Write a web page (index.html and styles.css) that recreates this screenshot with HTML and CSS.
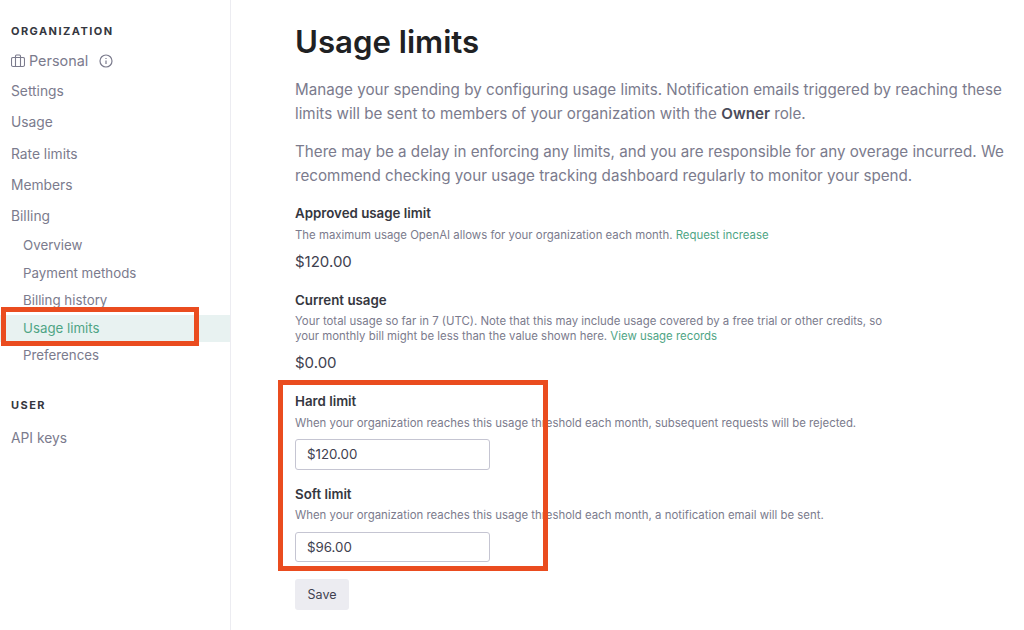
FILE: index.html
```html
<!DOCTYPE html>
<html lang="en">
<head>
<meta charset="utf-8">
<title>Usage limits</title>
<link rel="stylesheet" href="styles.css">
</head>
<body>
<div class="app">
  <aside class="sidebar">
    <div class="heading org-heading">ORGANIZATION</div>
    <div class="item personal">
      <svg class="icon" viewBox="0 0 14 14" width="14" height="14" fill="none" stroke="currentColor" stroke-width="1.100"><rect x="0.5" y="3.5" width="13" height="9" rx="1.500"/><path d="M4.500 3.500V2a1 1 0 0 1 1-1h3a1 1 0 0 1 1 1v1.500M4.500 3.500v9M9.500 3.500v9"/></svg>
      <span>Personal</span>
      <svg class="info" viewBox="0 0 14 14" width="14" height="14" fill="none" stroke="currentColor" stroke-width="1.200"><circle cx="7" cy="7" r="6"/><path d="M7 6.500v3.500M7 4v1"/></svg>
    </div>
    <div class="item">Settings</div>
    <div class="item">Usage</div>
    <div class="item">Rate limits</div>
    <div class="item">Members</div>
    <div class="item">Billing</div>
    <div class="sub">Overview</div>
    <div class="sub">Payment methods</div>
    <div class="sub">Billing history</div>
    <div class="sub active">Usage limits</div>
    <div class="sub">Preferences</div>
    <div class="heading user-heading">USER</div>
    <div class="item">API keys</div>
  </aside>
  <main class="content">
    <h1>Usage limits</h1>
    <p class="lead">Manage your spending by configuring usage limits. Notification emails triggered by reaching these limits will be sent to members of your organization with the <b>Owner</b> role.</p>
    <p class="lead second">There may be a delay in enforcing any limits, and you are responsible for any overage incurred. We recommend checking your usage tracking dashboard regularly to monitor your spend.</p>
    <section class="field approved">
      <h2>Approved usage limit</h2>
      <p class="hint">The maximum usage OpenAI allows for your organization each month. <a href="#">Request increase</a></p>
      <div class="value">$120.00</div>
    </section>
    <section class="field current">
      <h2>Current usage</h2>
      <p class="hint">Your total usage so far in 7 (UTC). Note that this may include usage covered by a free trial or other credits, so your monthly bill might be less than the value shown here. <a href="#">View usage records</a></p>
      <div class="value">$0.00</div>
    </section>
    <section class="field hard">
      <h2>Hard limit</h2>
      <p class="hint">When your organization reaches this usage threshold each month, subsequent requests will be rejected.</p>
      <input class="input" type="text" value="$120.00">
    </section>
    <section class="field soft">
      <h2>Soft limit</h2>
      <p class="hint">When your organization reaches this usage threshold each month, a notification email will be sent.</p>
      <input class="input" type="text" value="$96.00">
    </section>
    <button class="save" type="button">Save</button>
  </main>
  <div class="mark mark-nav"></div>
  <div class="mark mark-form"></div>
</div>
</body>
</html>
```
FILE: styles.css
```css
* { box-sizing: border-box; }
html, body { margin: 0; height: 100%; background: #fff; overflow: hidden; }
body { font-family: Inter, "Liberation Sans", sans-serif; color: #7b7b8d; }
.app { position: relative; display: flex; width: 1024px; height: 630px; overflow: hidden; }

.sidebar { width: 231px; flex: none; border-right: 1px solid #ececf1; padding-top: 24px; font-size: 13.800px; }
.heading { font-size: 11px; font-weight: 700; letter-spacing: 1.450px; color: #353740; line-height: 14px; padding-left: 11px; }
.item { height: 31.250px; line-height: 30.500px; padding-left: 11px; }
.personal { display: flex; align-items: center; height: 32px; margin-bottom: -1px; gap: 4px; font-size: 14.400px; }
.info { margin-left: 7px; }
.org-heading { margin-bottom: 7px; }
.sub { height: 27.500px; line-height: 26.500px; padding-left: 23px; font-size: 13.300px; }
.active { background: #e8f2f1; color: #4fa585; }
.user-heading { margin-top: 28px; margin-bottom: 11px; }

.content { flex: 1; padding: 21px 0 0 64px; }
h1 { margin: 0; font-size: 31.200px; line-height: 42px; font-weight: 600; color: #202123; }
.lead { margin: 15px 0 0; font-size: 15.200px; line-height: 24px; color: #7b7b8d; width: 715px; }
.lead b { font-weight: 600; color: #4a4b5a; }
.lead.second { margin-top: 14px; }
.field { margin: 0; }
h2 { margin: 0; font-size: 13.300px; line-height: 16px; font-weight: 600; color: #353740; }
.hint { margin: 6.500px 0 0; font-size: 11.400px; line-height: 15px; color: #7b7b8d; width: 590px; }
.hint a { color: #4fa585; text-decoration: none; }
.value { margin-top: 9px; font-size: 15px; line-height: 20px; color: #40414f; }
.approved { margin-top: 17px; }
.current { margin-top: 20px; }
.hard { margin-top: 20px; }
.soft { margin-top: 16px; }
.hint + .input { margin-top: 8.500px; }
.input { display: block; width: 195px; height: 30.500px; padding: 0 11px; border: 1px solid #c5c5d2; border-radius: 3px; background: #fff; font: 13.300px Inter, "Liberation Sans", sans-serif; color: #40414f; }
.save { display: block; margin-top: 17px; width: 54px; height: 31px; padding: 0; border: 0; border-radius: 3px; background: #ececf1; font: 12.500px Inter, "Liberation Sans", sans-serif; color: #40414f; }

.mark { position: absolute; border: 5px solid #ea4c1f; pointer-events: none; }
.mark-nav { left: 1px; top: 307px; width: 198px; height: 39px; }
.mark-form { left: 278px; top: 380px; width: 270px; height: 191px; }
```
